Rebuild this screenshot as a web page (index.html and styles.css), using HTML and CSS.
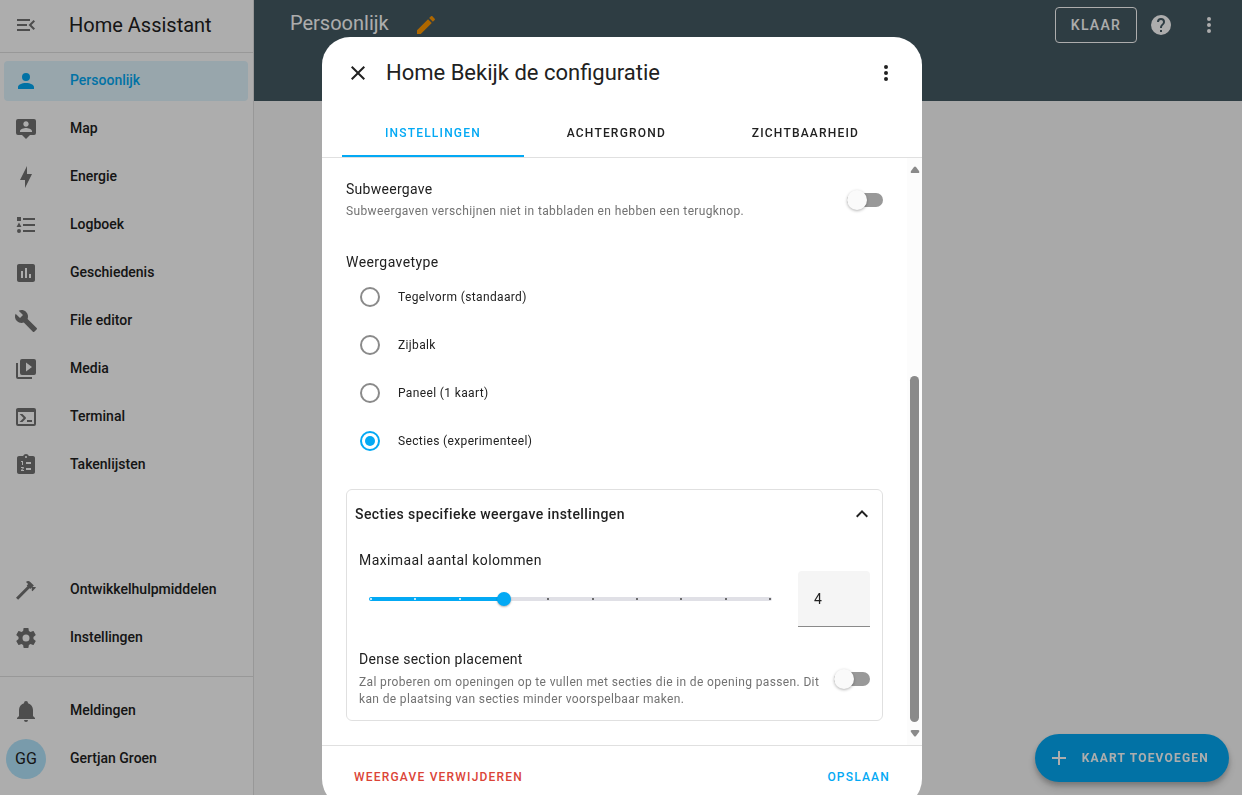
FILE: index.html
```html
<!DOCTYPE html>
<html lang="nl">
<head>
<meta charset="utf-8">
<meta name="viewport" content="width=device-width, initial-scale=1">
<title>Home Assistant</title>
<link rel="stylesheet" href="styles.css">
</head>
<body>
<div class="app">
  <aside class="sidebar">
    <div class="sidebar-head">
      <button class="icon-button" type="button" aria-label="Menu"><svg class="icon" viewBox="0 0 24 24"><path d="M21,15.61L19.59,17L14.58,12L19.59,7L21,8.39L17.44,12L21,15.61M3,6H16V8H3V6M3,13V11H13V13H3M3,18V16H16V18H3Z"/></svg></button>
      <span class="brand">Home Assistant</span>
    </div>
    <nav class="nav">
      <a class="nav-item active" href="#"><svg class="icon" viewBox="0 0 24 24"><path d="M12,4A4,4 0 0,1 16,8A4,4 0 0,1 12,12A4,4 0 0,1 8,8A4,4 0 0,1 12,4M12,14C16.42,14 20,15.79 20,18V20H4V18C4,15.79 7.58,14 12,14Z"/></svg><span>Persoonlijk</span></a>
      <a class="nav-item" href="#"><svg class="icon" viewBox="0 0 24 24"><path d="M20,2H4A2,2 0 0,0 2,4V16A2,2 0 0,0 4,18H8L12,22L16,18H20A2,2 0 0,0 22,16V4A2,2 0 0,0 20,2M12,4.3C13.5,4.3 14.7,5.5 14.7,7S13.5,9.7 12,9.7C10.5,9.7 9.3,8.5 9.3,7S10.5,4.3 12,4.3M18,15H6V14.1C6,12.1 10,11 12,11S18,12.1 18,14.1V15Z"/></svg><span>Map</span></a>
      <a class="nav-item" href="#"><svg class="icon" viewBox="0 0 24 24"><path d="M11 15H6L13 1V9H18L11 23V15Z"/></svg><span>Energie</span></a>
      <a class="nav-item" href="#"><svg class="icon" viewBox="0 0 24 24"><path d="M5,9.5L7.5,14H2.5L5,9.5M3,4H7V8H3V4M5,20A2,2 0 0,0 7,18A2,2 0 0,0 5,16A2,2 0 0,0 3,18A2,2 0 0,0 5,20M9,5V7H21V5H9M9,19H21V17H9V19M9,11V13H21V11H9Z"/></svg><span>Logboek</span></a>
      <a class="nav-item" href="#"><svg class="icon" viewBox="0 0 24 24"><path d="M9 17H7V10H9V17M13 17H11V7H13V17M17 17H15V13H17V17M19 3H5C3.89 3 3 3.89 3 5V19C3 20.1 3.9 21 5 21H19C20.1 21 21 20.1 21 19V5C21 3.89 20.1 3 19 3Z"/></svg><span>Geschiedenis</span></a>
      <a class="nav-item" href="#"><svg class="icon" viewBox="0 0 24 24"><path d="M22.7,19L13.6,9.9C14.5,7.6 14,4.9 12.1,3C10.1,1 7.1,0.6 4.7,1.7L9,6L6,9L1.6,4.7C0.4,7.1 0.9,10.1 2.9,12.1C4.8,14 7.5,14.5 9.8,13.6L18.9,22.7C19.3,23.1 19.9,23.1 20.3,22.7L22.6,20.4C23.1,20 23.1,19.3 22.7,19Z"/></svg><span>File editor</span></a>
      <a class="nav-item" href="#"><svg class="icon" viewBox="0 0 24 24"><path d="M4,6H2V20A2,2 0 0,0 4,22H18V20H4V6M20,2H8A2,2 0 0,0 6,4V16A2,2 0 0,0 8,18H20A2,2 0 0,0 22,16V4A2,2 0 0,0 20,2M12,14.5V5.5L18,10L12,14.5Z"/></svg><span>Media</span></a>
      <a class="nav-item" href="#"><svg class="icon" viewBox="0 0 24 24"><path d="M20,19V7H4V19H20M20,3A2,2 0 0,1 22,5V19A2,2 0 0,1 20,21H4A2,2 0 0,1 2,19V5C2,3.89 2.9,3 4,3H20M13,17V15H18V17H13M9.58,13L5.57,9H8.4L11.7,12.3C12.09,12.69 12.09,13.33 11.7,13.72L8.42,17H5.59L9.58,13Z"/></svg><span>Terminal</span></a>
      <a class="nav-item" href="#"><svg class="icon" viewBox="0 0 24 24"><path d="M19 3H14.82C14.4 1.84 13.3 1 12 1S9.6 1.84 9.18 3H5C3.9 3 3 3.9 3 5V19C3 20.1 3.9 21 5 21H19C20.1 21 21 20.1 21 19V5C21 3.9 20.1 3 19 3M7 8H9V12H8V9H7V8M10 17V18H7V17.08L9 15H7V14H9.25C9.66 14 10 14.34 10 14.75C10 14.95 9.92 15.14 9.79 15.27L8.12 17H10M11 4C11 3.45 11.45 3 12 3S13 3.45 13 4 12.55 5 12 5 11 4.55 11 4M17 17H12V15H17V17M17 11H12V9H17V11Z"/></svg><span>Takenlijsten</span></a>
    </nav>
    <nav class="nav nav-tools">
      <a class="nav-item" href="#"><svg class="icon" viewBox="0 0 24 24"><path d="M2 19.63L13.43 8.2L12.72 7.5L14.14 6.07L12 3.89C13.2 2.7 15.09 2.7 16.27 3.89L19.87 7.5L18.45 8.91H21.29L22 9.62L18.45 13.21L17.74 12.5V9.62L16.27 11.04L15.56 10.33L4.13 21.76L2 19.63Z"/></svg><span>Ontwikkelhulpmiddelen</span></a>
      <a class="nav-item" href="#"><svg class="icon" viewBox="0 0 24 24"><path d="M12,15.5A3.5,3.5 0 0,1 8.5,12A3.5,3.5 0 0,1 12,8.5A3.5,3.5 0 0,1 15.5,12A3.5,3.5 0 0,1 12,15.5M19.43,12.97C19.47,12.65 19.5,12.33 19.5,12C19.5,11.67 19.47,11.34 19.43,11L21.54,9.37C21.73,9.22 21.78,8.95 21.66,8.73L19.66,5.27C19.54,5.05 19.27,4.96 19.05,5.05L16.56,6.05C16.04,5.66 15.5,5.32 14.87,5.07L14.5,2.42C14.46,2.18 14.25,2 14,2H10C9.75,2 9.54,2.18 9.5,2.42L9.13,5.07C8.5,5.32 7.96,5.66 7.44,6.05L4.95,5.05C4.73,4.96 4.46,5.05 4.34,5.27L2.34,8.73C2.21,8.95 2.27,9.22 2.46,9.37L4.57,11C4.53,11.34 4.5,11.67 4.5,12C4.5,12.33 4.53,12.65 4.57,12.97L2.46,14.63C2.27,14.78 2.21,15.05 2.34,15.27L4.34,18.73C4.46,18.95 4.73,19.03 4.95,18.95L7.44,17.94C7.96,18.34 8.5,18.68 9.13,18.93L9.5,21.58C9.54,21.82 9.75,22 10,22H14C14.25,22 14.46,21.82 14.5,21.58L14.87,18.93C15.5,18.67 16.04,18.34 16.56,17.94L19.05,18.95C19.27,19.03 19.54,18.95 19.66,18.73L21.66,15.27C21.78,15.05 21.73,14.78 21.54,14.63L19.43,12.97Z"/></svg><span>Instellingen</span></a>
    </nav>
    <nav class="nav nav-user">
      <a class="nav-item" href="#"><svg class="icon" viewBox="0 0 24 24"><path d="M21,19V20H3V19L5,17V11C5,7.9 7.03,5.17 10,4.29C10,4.19 10,4.1 10,4A2,2 0 0,1 12,2A2,2 0 0,1 14,4C14,4.1 14,4.19 14,4.29C16.97,5.17 19,7.9 19,11V17L21,19M14,21A2,2 0 0,1 12,23A2,2 0 0,1 10,21"/></svg><span>Meldingen</span></a>
      <a class="nav-item profile" href="#"><span class="avatar">GG</span><span>Gertjan Groen</span></a>
    </nav>
  </aside>

  <main class="main">
    <header class="topbar">
      <h1 class="view-title">Persoonlijk</h1>
      <button class="icon-button edit" type="button" aria-label="Titel bewerken"><svg class="icon" viewBox="0 0 24 24"><path d="M20.71,7.04C21.1,6.65 21.1,6 20.71,5.63L18.37,3.29C18,2.9 17.35,2.9 16.96,3.29L15.12,5.12L18.87,8.87M3,17.25V21H6.75L17.81,9.93L14.06,6.18L3,17.25Z"/></svg></button>
      <div class="topbar-actions">
        <button class="done" type="button">KLAAR</button>
        <button class="icon-button" type="button" aria-label="Help"><svg class="icon" viewBox="0 0 24 24"><path d="M15.07,11.25L14.17,12.17C13.45,12.89 13,13.5 13,15H11V14.5C11,13.39 11.45,12.39 12.17,11.67L13.41,10.41C13.78,10.05 14,9.55 14,9C14,7.89 13.1,7 12,7A2,2 0 0,0 10,9H8A4,4 0 0,1 12,5A4,4 0 0,1 16,9C16,9.88 15.64,10.67 15.07,11.25M13,19H11V17H13M12,2A10,10 0 0,0 2,12A10,10 0 0,0 12,22A10,10 0 0,0 22,12C22,6.47 17.5,2 12,2Z"/></svg></button>
        <button class="icon-button" type="button" aria-label="Meer"><svg class="icon" viewBox="0 0 24 24"><path d="M12,16A2,2 0 0,1 14,18A2,2 0 0,1 12,20A2,2 0 0,1 10,18A2,2 0 0,1 12,16M12,10A2,2 0 0,1 14,12A2,2 0 0,1 12,14A2,2 0 0,1 10,12A2,2 0 0,1 12,10M12,4A2,2 0 0,1 14,6A2,2 0 0,1 12,8A2,2 0 0,1 10,6A2,2 0 0,1 12,4Z"/></svg></button>
      </div>
    </header>
    <button class="fab" type="button"><svg class="icon" viewBox="0 0 24 24"><path d="M19,13H13V19H11V13H5V11H11V5H13V11H19V13Z"/></svg><span>KAART TOEVOEGEN</span></button>
  </main>
</div>

<div class="scrim">
  <section class="dialog" role="dialog" aria-modal="true" aria-labelledby="dialog-title">
    <header class="dialog-head">
      <button class="icon-button" type="button" aria-label="Sluiten"><svg class="icon" viewBox="0 0 24 24"><path d="M19,6.41L17.59,5L12,10.59L6.41,5L5,6.41L10.59,12L5,17.59L6.41,19L12,13.41L17.59,19L19,17.59L13.41,12L19,6.41Z"/></svg></button>
      <h2 class="dialog-title" id="dialog-title">Home Bekijk de configuratie</h2>
      <button class="icon-button" type="button" aria-label="Meer opties"><svg class="icon" viewBox="0 0 24 24"><path d="M12,16A2,2 0 0,1 14,18A2,2 0 0,1 12,20A2,2 0 0,1 10,18A2,2 0 0,1 12,16M12,10A2,2 0 0,1 14,12A2,2 0 0,1 12,14A2,2 0 0,1 10,12A2,2 0 0,1 12,10M12,4A2,2 0 0,1 14,6A2,2 0 0,1 12,8A2,2 0 0,1 10,6A2,2 0 0,1 12,4Z"/></svg></button>
    </header>
    <div class="tabs" role="tablist">
      <button class="tab selected" type="button" role="tab" aria-selected="true">INSTELLINGEN</button>
      <button class="tab" type="button" role="tab" aria-selected="false">ACHTERGROND</button>
      <button class="tab" type="button" role="tab" aria-selected="false">ZICHTBAARHEID</button>
    </div>
    <div class="dialog-body">
      <form class="form">
        <div class="setting">
          <div class="setting-text">
            <label class="label" for="subview">Subweergave</label>
            <p class="hint">Subweergaven verschijnen niet in tabbladen en hebben een terugknop.</p>
          </div>
          <input class="switch" id="subview" type="checkbox" role="switch">
        </div>
        <fieldset class="types">
          <legend class="label wide">Weergavetype</legend>
          <label class="option"><input class="radio" type="radio" name="type"><span>Tegelvorm (standaard)</span></label>
          <label class="option"><input class="radio" type="radio" name="type"><span>Zijbalk</span></label>
          <label class="option"><input class="radio" type="radio" name="type"><span>Paneel (1 kaart)</span></label>
          <label class="option"><input class="radio" type="radio" name="type" checked><span>Secties (experimenteel)</span></label>
        </fieldset>
        <section class="panel">
          <button class="panel-head" type="button" aria-expanded="true"><span>Secties specifieke weergave instellingen</span><svg class="icon" viewBox="0 0 24 24"><path d="M7.41,15.41L12,10.83L16.59,15.41L18,14L12,8L6,14L7.41,15.41Z"/></svg></button>
          <div class="panel-body">
            <label class="label wide" for="columns">Maximaal aantal kolommen</label>
            <div class="slider-row">
              <div class="slider">
                <div class="track"></div>
                <div class="ticks"><i class="on"></i><i class="on"></i><i class="on"></i><i></i><i></i><i></i><i></i><i></i><i></i><i></i></div>
                <input class="range" id="columns" type="range" min="1" max="10" value="4">
              </div>
              <input class="number" type="text" inputmode="numeric" value="4" aria-label="Aantal kolommen">
            </div>
            <div class="setting dense">
              <div class="setting-text">
                <label class="label" for="dense">Dense section placement</label>
                <p class="hint">Zal proberen om openingen op te vullen met secties die in de opening passen. Dit kan de plaatsing van secties minder voorspelbaar maken.</p>
              </div>
              <input class="switch" id="dense" type="checkbox" role="switch">
            </div>
          </div>
        </section>
      </form>
      <div class="scrollbar" aria-hidden="true">
        <svg class="arrow" viewBox="0 0 10 8"><path d="M4 1Q5 0 6 1L9 5Q10 7 8 7H2Q0 7 1 5Z"/></svg>
        <div class="scroll-thumb"></div>
        <svg class="arrow" viewBox="0 0 10 8"><path d="M4 7Q5 8 6 7L9 3Q10 1 8 1H2Q0 1 1 3Z"/></svg>
      </div>
    </div>
    <footer class="dialog-foot">
      <button class="text-button danger" type="button">WEERGAVE VERWIJDEREN</button>
      <button class="text-button" type="button">OPSLAAN</button>
    </footer>
  </section>
</div>
</body>
</html>
```
FILE: styles.css
```css
:root {
  --primary: #03a9f4;
  --text: #212121;
  --secondary: #727272;
  --divider: #e0e0e0;
}

* { box-sizing: border-box; }

body {
  margin: 0;
  height: 100vh;
  overflow: hidden;
  font: 400 14px/20px Roboto, "Liberation Sans", sans-serif;
  color: var(--text);
  background: #fafafa;
}

button, input { font: inherit; color: inherit; }

button {
  border: 0;
  padding: 0;
  background: none;
  cursor: pointer;
}

.icon {
  display: block;
  flex: none;
  width: 24px;
  height: 24px;
  fill: currentColor;
  fill-rule: evenodd;
}

.icon-button {
  display: flex;
  align-items: center;
  justify-content: center;
  flex: none;
  width: 48px;
  height: 48px;
}

/* Page */
.app {
  display: flex;
  height: 100vh;
}

.sidebar {
  display: flex;
  flex-direction: column;
  flex: none;
  width: 254px;
  background: #fff;
  border-right: 1px solid var(--divider);
}

.sidebar-head {
  display: flex;
  align-items: center;
  gap: 19px;
  height: 53px;
  padding: 0 2px 2px;
  border-bottom: 1px solid var(--divider);
  color: var(--secondary);
}

.brand {
  font-size: 20px;
  color: var(--text);
}

.nav {
  display: flex;
  flex-direction: column;
  gap: 8px;
  padding: 8px 5px 8px 4px;
}

.nav-tools { margin-top: auto; padding-bottom: 18px; }

.nav-user {
  padding-top: 14px;
  padding-bottom: 16px;
  border-top: 1px solid var(--divider);
}

.nav-item {
  display: flex;
  align-items: center;
  gap: 32px;
  height: 40px;
  padding: 0 10px;
  border-radius: 4px;
  font-weight: 500;
  color: var(--text);
  text-decoration: none;
}

.nav-item .icon { color: var(--secondary); }
.nav-item span { padding-bottom: 2px; }

.nav-item.active { background: #e0f5fe; }
.nav-item.active, .nav-item.active .icon { color: var(--primary); }

.nav-item.profile { padding-left: 2px; gap: 24px; }

.nav-item .avatar {
  display: grid;
  place-items: center;
  width: 40px;
  height: 40px;
  padding: 0;
  border-radius: 50%;
  background: #b3e5fc;
  font-size: 16px;
  font-weight: 400;
}

.main { flex: 1; }

.topbar {
  display: flex;
  align-items: flex-start;
  height: 101px;
  padding: 1px 9px 0 36px;
  background: #455a64;
  color: #fff;
}

.view-title {
  margin: 0;
  font-size: 20px;
  font-weight: 400;
  line-height: 44px;
}

.icon-button.edit { margin-left: 13px; color: #ff9800; }

.topbar-actions {
  display: flex;
  align-items: center;
  margin-left: auto;
}

.done {
  height: 36px;
  padding: 0 15px;
  border: 1px solid #fff;
  border-radius: 4px;
  font-weight: 500;
  letter-spacing: 0.09em;
}

.fab {
  position: fixed;
  right: 13px;
  bottom: 13px;
  display: flex;
  align-items: center;
  gap: 11px;
  height: 48px;
  padding: 0 20px 0 12px;
  border-radius: 24px;
  background: var(--primary);
  color: #fff;
  font-size: 12px;
  font-weight: 700;
  letter-spacing: 0.1em;
  box-shadow: 0 3px 5px rgba(0, 0, 0, 0.2), 0 6px 10px rgba(0, 0, 0, 0.14);
}

/* Dialog */
.scrim {
  position: fixed;
  inset: 0;
  display: flex;
  align-items: flex-start;
  justify-content: center;
  padding: 37px 0 0 2px;
  overflow: hidden;
  background: rgba(0, 0, 0, 0.32);
}

.dialog {
  flex: none;
  width: 600px;
  max-width: 100%;
  border-radius: 28px;
  overflow: hidden;
  background: #fff;
}

.dialog-head {
  display: flex;
  align-items: center;
  gap: 4px;
  padding: 12px;
}

.dialog-title {
  flex: 1;
  margin: 0;
  font-size: 22px;
  font-weight: 400;
  line-height: 28px;
}

.tabs {
  display: flex;
  padding: 0 20px;
  border-bottom: 1px solid var(--divider);
}

.tab {
  flex: 1 1 auto;
  height: 48px;
  padding-top: 2px;
  border-bottom: 2px solid transparent;
  font-size: 12px;
  font-weight: 500;
  letter-spacing: 0.1em;
}

.tab.selected {
  border-color: var(--primary);
  color: var(--primary);
}

.dialog-body { display: flex; }

.form {
  flex: 1;
  padding: 21px 24px 24px;
}

.setting {
  display: flex;
  align-items: center;
  gap: 12px;
}

.setting-text { flex: 1; }

.label {
  display: block;
  padding: 0;
  letter-spacing: 0.02em;
}

.label.wide { letter-spacing: 0.03em; }

.hint {
  margin: 4px 0 0;
  font-size: 12px;
  line-height: 17px;
  letter-spacing: 0.03em;
  color: var(--secondary);
}

.switch {
  appearance: none;
  flex: none;
  width: 36px;
  height: 14px;
  margin: 0;
  border-radius: 7px;
  background: #999;
}

.switch::before {
  content: "";
  display: block;
  width: 20px;
  height: 20px;
  margin-top: -3px;
  border-radius: 50%;
  background: #fafafa;
  box-shadow: 0 1px 3px rgba(0, 0, 0, 0.3);
}

.types {
  margin: 32px 0 24px;
  padding: 1px 0 0;
  border: 0;
}

.option {
  display: flex;
  align-items: center;
  gap: 18px;
  height: 48px;
  padding-left: 14px;
  font-size: 12px;
  letter-spacing: 0.03em;
}

.radio {
  appearance: none;
  display: grid;
  place-items: center;
  width: 20px;
  height: 20px;
  margin: 0;
  border: 2px solid #8a8a8a;
  border-radius: 50%;
}

.radio:checked { border-color: var(--primary); }

.radio:checked::before {
  content: "";
  width: 10px;
  height: 10px;
  border-radius: 50%;
  background: var(--primary);
}

.panel {
  border: 1px solid var(--divider);
  border-radius: 6px;
}

.panel-head {
  display: flex;
  align-items: center;
  justify-content: space-between;
  width: 100%;
  height: 48px;
  padding: 0 8px;
  font-weight: 500;
  letter-spacing: 0.03em;
}

.panel-body { padding: 12px; }

.slider-row {
  display: flex;
  align-items: center;
  gap: 26px;
  margin-top: 1px;
  padding-left: 10px;
}

.slider {
  display: grid;
  flex: 1;
  align-items: center;
}

.slider > * { grid-area: 1 / 1; }

.track {
  height: 4px;
  border-radius: 2px;
  background: linear-gradient(to right, var(--primary) 33%, #e0e0e6 33%);
}

.ticks {
  display: flex;
  justify-content: space-between;
  padding: 0 1px;
}

.ticks i {
  width: 2px;
  height: 2px;
  border-radius: 1px;
  background: #444;
}

.ticks .on { background: #fff; }

.range {
  appearance: none;
  width: calc(100% + 10px);
  height: 20px;
  margin: 0 -5px;
  background: none;
}

.range::-webkit-slider-thumb {
  appearance: none;
  width: 14px;
  height: 14px;
  border-radius: 50%;
  background: var(--primary);
  box-shadow: 0 1px 2px rgba(0, 0, 0, 0.3);
}

.number {
  width: 72px;
  height: 56px;
  padding: 0 16px;
  border: 0;
  border-bottom: 1px solid #8a8a8a;
  border-radius: 4px 4px 0 0;
  background: #f5f5f5;
}

.dense { margin-top: 22px; }
.dense .hint { margin-top: 5px; }

.scrollbar {
  display: flex;
  flex-direction: column;
  align-items: center;
  width: 15px;
  padding: 8px 0;
  background: #fcfcfc;
}

.arrow {
  width: 10px;
  height: 8px;
  fill: #8a8a8a;
}

.scroll-thumb {
  width: 9px;
  height: 346px;
  margin: auto 0 7px;
  border-radius: 5px;
  background: #8a8a8a;
}

.dialog-foot {
  display: flex;
  align-items: center;
  justify-content: space-between;
  height: 62px;
  padding: 0 24px;
  border-top: 1px solid var(--divider);
}

.text-button {
  height: 36px;
  padding: 0 8px;
  font-size: 12px;
  font-weight: 500;
  letter-spacing: 0.1em;
  color: var(--primary);
}

.text-button.danger { color: #db4437; }
```
